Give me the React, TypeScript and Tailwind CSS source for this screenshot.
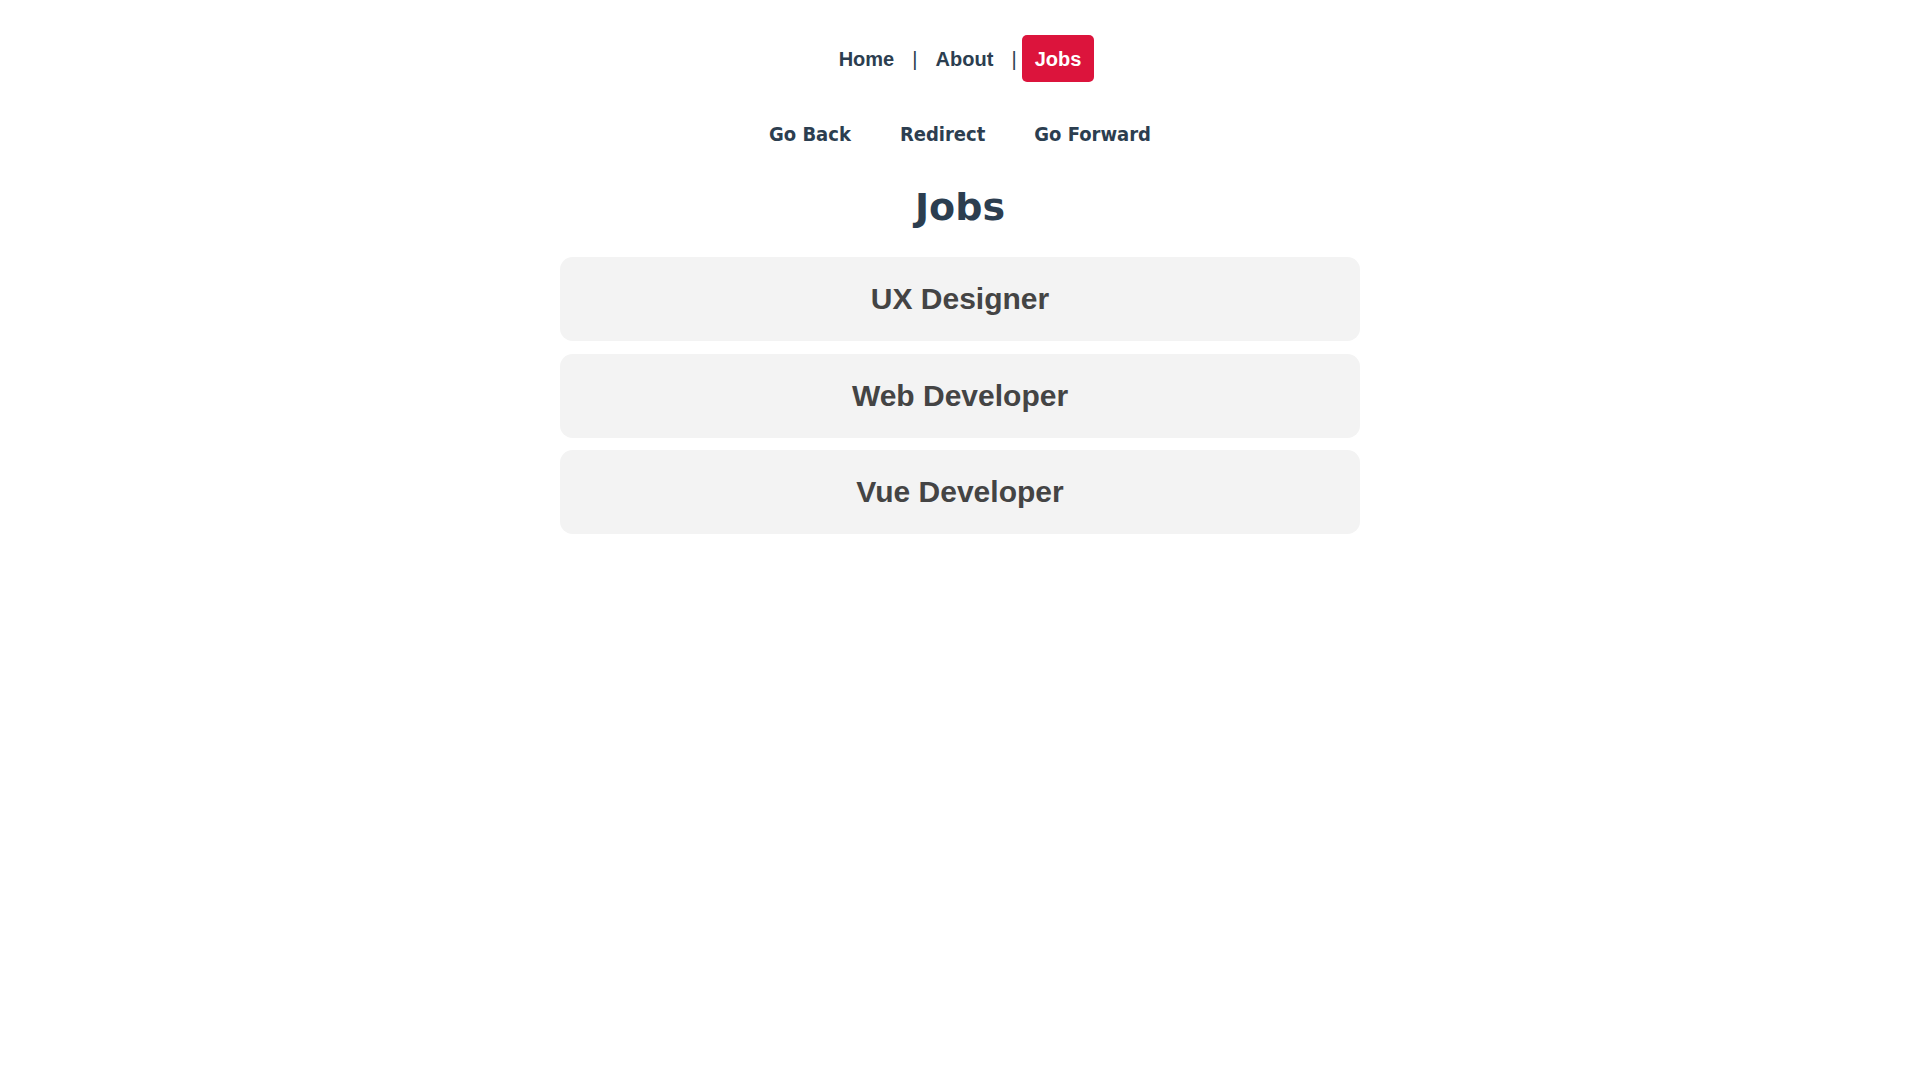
import React from "react";

const jobs = ["UX Designer", "Web Developer", "Vue Developer"];

export default function App() {
  return (
    <div className="min-h-screen w-full bg-white text-[#2c3e50]">
      {/* top nav */}
      <nav className="pt-[47.5px] text-center text-[20px] leading-[23px] font-['Liberation_Sans',Arial,sans-serif]">
        <a className="px-[12.5px] py-[12.5px] rounded-[5px] font-bold text-[#2c3e50]">Home</a>{" "}
        |{" "}
        <a className="px-[12.5px] py-[12.5px] rounded-[5px] font-bold text-[#2c3e50]">About</a>{" "}
        |{" "}
        <a className="px-[12.5px] py-[12.5px] rounded-[5px] font-bold bg-[#dc143c] text-white">Jobs</a>
      </nav>

      {/* history buttons */}
      <div className="mt-[52px] flex justify-center gap-[49px] text-[20px] leading-[23px] font-bold font-['DejaVu_Sans_Condensed','Noto_Sans',sans-serif]">
        <button className="text-[#2c3e50]">Go Back</button>
        <button className="text-[#2c3e50]">Redirect</button>
        <button className="text-[#2c3e50]">Go Forward</button>
      </div>

      <h1 className="mt-[38.5px] text-center text-[38px] leading-[46px] font-bold font-['DejaVu_Sans',sans-serif]">
        Jobs
      </h1>

      <div className="mt-[27px] mx-auto max-w-[800px]">
        {jobs.map((job) => (
          <div
            key={job}
            className="mb-[12.5px] h-[84px] rounded-[12.5px] bg-[#f3f3f3] py-[25px] text-center text-[30px] leading-[34px] font-bold text-[#444] font-['Liberation_Sans',Arial,sans-serif] cursor-pointer"
          >
            {job}
          </div>
        ))}
      </div>
    </div>
  );
}
